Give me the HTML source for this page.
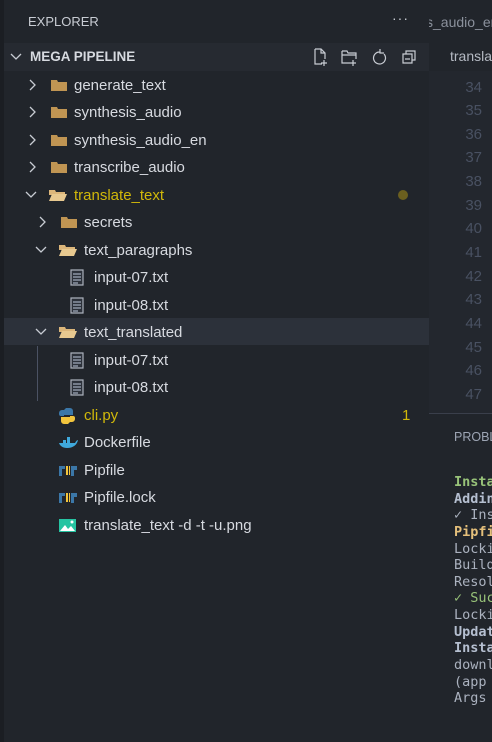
<!DOCTYPE html>
<html><head><style>
*{margin:0;padding:0;box-sizing:border-box}
html,body{overflow:hidden}
body{width:492px;height:742px;overflow:hidden;background:#21252b;font-family:"Liberation Sans","Segoe UI",sans-serif;position:relative;color:#d7dae0}
.strip{position:absolute;left:0;top:0;width:4px;height:742px;background:#1b1e23}
.side{position:absolute;left:4px;top:0;width:425px;height:742px;background:#21252b}
.title{position:absolute;left:28px;top:14px;font-size:13px;color:#c8ccd3}
.dots{position:absolute;left:392px;top:10px;font-size:14px;color:#c8ccd3;letter-spacing:1px}
.hdr{position:absolute;left:4px;top:43px;width:425px;height:28px;background:#262a31}
.hdr span{position:absolute;left:26px;top:6px;font-size:13.5px;font-weight:bold;color:#d7dae0}
.row{position:absolute;left:4px;width:425px;height:27px;font-size:15px;line-height:29px;color:#d7dae0;white-space:nowrap}
.row.sel{background:#2c313a}
.chev{position:absolute;top:1px;width:14px;height:27px}
.ic{position:absolute;top:7px}
.lbl{position:absolute;top:0}
.ed{position:absolute;left:429px;top:71px;width:63px;height:342px;background:#23272e;overflow:hidden}
.ln{position:absolute;right:10px;font-size:15px;color:#495162;font-family:"Liberation Sans",sans-serif}
.tab{position:absolute;left:429px;top:0;width:63px;height:71px;color:#8b919c;font-size:14px;overflow:hidden}
.panel{position:absolute;left:429px;top:413px;width:63px;height:329px;background:#21252b;border-top:1px solid #3a3f4b;overflow:hidden}
.t{position:absolute;left:25px;font-family:"DejaVu Sans Mono","Liberation Mono",monospace;font-size:13.5px;white-space:nowrap;color:#abb2bf}
.guide{position:absolute;left:37px;top:346px;width:1px;height:55px;background:#4b5263}
</style></head><body>
<div class="strip"></div>
<div class="side"></div>
<div class="title">EXPLORER</div>
<div class="dots">···</div>
<div class="tab"><span style="position:absolute;left:-3px;top:14px">s_audio_en</span><span style="position:absolute;left:21px;top:48px;color:#b5bac3">transla</span></div>
<div class="hdr">
<svg style="position:absolute;left:6px;top:9px" width="12" height="10"><path d="M1 2l5 5 5-5" stroke="#c8ccd3" fill="none" stroke-width="1.3"/></svg>
<span>MEGA PIPELINE</span>
<svg style="position:absolute;left:310px;top:5px" width="110" height="18" fill="none" stroke="#c8ccd3" stroke-width="1.2">
<path d="M1 1h6l4 4v6M1 1v15h7M7 1v4h4M10 12v6M7 15h6"/>
<path d="M28 3h5l1 2h8v6M28 3v12h8M28 7h14M39 12v6M36 15h6"/>
<path d="M66 4a6 6 0 1 0 4 2M66 1v4h4"/>
<path d="M89 6h9v9h-9zM92 6V3h9v9h-3M91 11h5"/>
</svg>
</div>
<div class="guide"></div>

<div class="row" style="top:71px"><svg class="chev" style="left:22px" viewBox="0 0 14 27"><path d="M4 8l5 5-5 5" stroke="#c8ccd3" fill="none" stroke-width="1.3"/></svg><svg class="ic" style="left:46px" width="18" height="14"><path d="M1 2h6l1 2h9v9H1z" fill="#c09553"/></svg><span class="lbl" style="left:70px">generate_text</span></div>
<div class="row" style="top:98px"><svg class="chev" style="left:22px" viewBox="0 0 14 27"><path d="M4 8l5 5-5 5" stroke="#c8ccd3" fill="none" stroke-width="1.3"/></svg><svg class="ic" style="left:46px" width="18" height="14"><path d="M1 2h6l1 2h9v9H1z" fill="#c09553"/></svg><span class="lbl" style="left:70px">synthesis_audio</span></div>
<div class="row" style="top:126px"><svg class="chev" style="left:22px" viewBox="0 0 14 27"><path d="M4 8l5 5-5 5" stroke="#c8ccd3" fill="none" stroke-width="1.3"/></svg><svg class="ic" style="left:46px" width="18" height="14"><path d="M1 2h6l1 2h9v9H1z" fill="#c09553"/></svg><span class="lbl" style="left:70px">synthesis_audio_en</span></div>
<div class="row" style="top:153px"><svg class="chev" style="left:22px" viewBox="0 0 14 27"><path d="M4 8l5 5-5 5" stroke="#c8ccd3" fill="none" stroke-width="1.3"/></svg><svg class="ic" style="left:46px" width="18" height="14"><path d="M1 2h6l1 2h9v9H1z" fill="#c09553"/></svg><span class="lbl" style="left:70px">transcribe_audio</span></div>
<div class="row" style="top:181px;color:#d1b80a"><svg class="chev" style="left:20px" viewBox="0 0 14 27"><path d="M2 10l5 5 5-5" stroke="#c8ccd3" fill="none" stroke-width="1.3"/></svg><svg class="ic" style="left:44px" width="20" height="14"><path d="M1 2h6l1 2h9v3H1z" fill="#dcb67a"/><path d="M1 13l3-7h15l-3 7z" fill="#e8c990"/></svg><span class="lbl" style="left:70px">translate_text</span><span style="position:absolute;left:394px;top:9px;width:10px;height:10px;border-radius:5px;background:#6b5f1f"></span></div>
<div class="row" style="top:208px"><svg class="chev" style="left:32px" viewBox="0 0 14 27"><path d="M4 8l5 5-5 5" stroke="#c8ccd3" fill="none" stroke-width="1.3"/></svg><svg class="ic" style="left:56px" width="18" height="14"><path d="M1 2h6l1 2h9v9H1z" fill="#c09553"/></svg><span class="lbl" style="left:80px">secrets</span></div>
<div class="row" style="top:236px"><svg class="chev" style="left:30px" viewBox="0 0 14 27"><path d="M2 10l5 5 5-5" stroke="#c8ccd3" fill="none" stroke-width="1.3"/></svg><svg class="ic" style="left:54px" width="20" height="14"><path d="M1 2h6l1 2h9v3H1z" fill="#dcb67a"/><path d="M1 13l3-7h15l-3 7z" fill="#e8c990"/></svg><span class="lbl" style="left:80px">text_paragraphs</span></div>
<div class="row" style="top:263px"><svg class="ic" style="left:66px;top:6px" width="14" height="17"><path d="M1 1h12v15H1z" fill="#2c313a" stroke="#aab0bb" stroke-width="1.2"/><path d="M3 5h8M3 8h8M3 11h8M3 14h5" stroke="#8b95a5" stroke-width="1.4"/></svg><span class="lbl" style="left:90px">input-07.txt</span></div>
<div class="row" style="top:291px"><svg class="ic" style="left:66px;top:6px" width="14" height="17"><path d="M1 1h12v15H1z" fill="#2c313a" stroke="#aab0bb" stroke-width="1.2"/><path d="M3 5h8M3 8h8M3 11h8M3 14h5" stroke="#8b95a5" stroke-width="1.4"/></svg><span class="lbl" style="left:90px">input-08.txt</span></div>
<div class="row sel" style="top:318px"><svg class="chev" style="left:30px" viewBox="0 0 14 27"><path d="M2 10l5 5 5-5" stroke="#c8ccd3" fill="none" stroke-width="1.3"/></svg><svg class="ic" style="left:54px" width="20" height="14"><path d="M1 2h6l1 2h9v3H1z" fill="#dcb67a"/><path d="M1 13l3-7h15l-3 7z" fill="#e8c990"/></svg><span class="lbl" style="left:80px">text_translated</span></div>
<div class="row" style="top:346px"><svg class="ic" style="left:66px;top:6px" width="14" height="17"><path d="M1 1h12v15H1z" fill="#2c313a" stroke="#aab0bb" stroke-width="1.2"/><path d="M3 5h8M3 8h8M3 11h8M3 14h5" stroke="#8b95a5" stroke-width="1.4"/></svg><span class="lbl" style="left:90px">input-07.txt</span></div>
<div class="row" style="top:373px"><svg class="ic" style="left:66px;top:6px" width="14" height="17"><path d="M1 1h12v15H1z" fill="#2c313a" stroke="#aab0bb" stroke-width="1.2"/><path d="M3 5h8M3 8h8M3 11h8M3 14h5" stroke="#8b95a5" stroke-width="1.4"/></svg><span class="lbl" style="left:90px">input-08.txt</span></div>
<div class="row" style="top:401px;color:#d1b80a"><svg class="ic" style="left:54px;top:6px" width="18" height="18"><path d="M8 1h4a3 3 0 0 1 3 3v4H6v1H3a2 2 0 0 1-2-2V6a3 3 0 0 1 3-3h2V3z" fill="#3b77a8"/><path d="M10 17H6a3 3 0 0 1-3-3v-4h9V9h3a2 2 0 0 1 2 2v1a3 3 0 0 1-3 3h-2z" fill="#f2c53d"/></svg><span class="lbl" style="left:80px">cli.py</span><span style="position:absolute;left:398px;top:0;color:#d1b80a">1</span></div>
<div class="row" style="top:428px"><svg class="ic" style="left:54px;top:8px" width="20" height="14"><path d="M1 7h16c1-2 2-3 3-3-1 5-5 8-11 8-4 0-7-2-8-5z" fill="#3fa9dc"/><path d="M5 4h3v3H5zM9 4h3v3H9zM9 1h3v3H9z" fill="#3fa9dc"/></svg><span class="lbl" style="left:80px">Dockerfile</span></div>
<div class="row" style="top:456px"><svg class="ic" style="left:54px;top:9px" width="20" height="12"><path d="M1 1h6v3H4v7H1zM13 1h6v4h-3v6h-3z" fill="#3b77a8"/><path d="M8 1h2v9H8zM11 1h1v9h-1z" fill="#f2c53d"/></svg><span class="lbl" style="left:80px">Pipfile</span></div>
<div class="row" style="top:483px"><svg class="ic" style="left:54px;top:9px" width="20" height="12"><path d="M1 1h6v3H4v7H1zM13 1h6v4h-3v6h-3z" fill="#3b77a8"/><path d="M8 1h2v9H8zM11 1h1v9h-1z" fill="#f2c53d"/></svg><span class="lbl" style="left:80px">Pipfile.lock</span></div>
<div class="row" style="top:511px"><svg class="ic" style="left:54px;top:7px" width="20" height="15"><rect x="1" y="1" width="17" height="13" fill="#26c4a2"/><path d="M2 13l5-6 3 4 3-3 4 5z" fill="#fff"/><circle cx="14" cy="4" r="1.5" fill="#fff"/></svg><span class="lbl" style="left:80px">translate_text -d -t -u.png</span></div>

<div class="ed">
<div class="ln" style="top:8px">34</div><div class="ln" style="top:31px">35</div><div class="ln" style="top:55px">36</div><div class="ln" style="top:78px">37</div><div class="ln" style="top:102px">38</div><div class="ln" style="top:126px">39</div><div class="ln" style="top:149px">40</div><div class="ln" style="top:173px">41</div><div class="ln" style="top:197px">42</div><div class="ln" style="top:220px">43</div><div class="ln" style="top:244px">44</div><div class="ln" style="top:268px">45</div><div class="ln" style="top:291px">46</div><div class="ln" style="top:315px">47</div>
</div>
<div class="panel">
<div style="position:absolute;left:25px;top:16px;font-size:12.5px;color:#9da5b4">PROBLEMS</div>
<div class="t" style="top:60px;color:#98c379;font-weight:bold">Installing</div>
<div class="t" style="top:77px;font-weight:bold;color:#b5bfd0">Adding</div>
<div class="t" style="top:93px">✓ Installed</div>
<div class="t" style="top:110px;color:#e5c07b;font-weight:bold">Pipfile</div>
<div class="t" style="top:127px">Locking</div>
<div class="t" style="top:143px">Building</div>
<div class="t" style="top:160px">Resolving</div>
<div class="t" style="top:176px;color:#98c379">✓ Success</div>
<div class="t" style="top:193px">Locking</div>
<div class="t" style="top:210px;font-weight:bold;color:#b5bfd0">Updated</div>
<div class="t" style="top:226px;font-weight:bold;color:#b5bfd0">Installing</div>
<div class="t" style="top:243px">downloading</div>
<div class="t" style="top:260px">(app</div>
<div class="t" style="top:276px">Args</div>
</div>
</body></html>
